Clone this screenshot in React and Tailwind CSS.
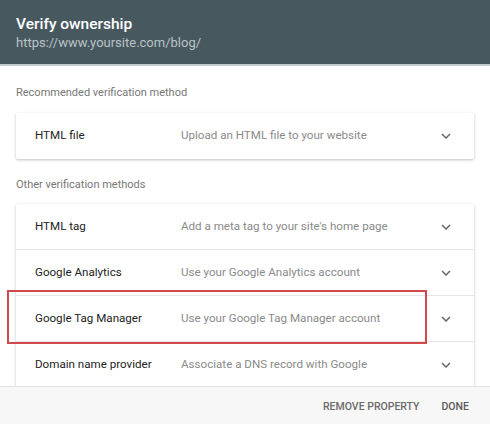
import React from 'react';

const Chevron = () => (
  <svg width="18" height="18" viewBox="0 0 24 24" className="text-[#666]">
    <path d="M7.41 8.59 12 13.17l4.59-4.58L18 10l-6 6-6-6z" fill="currentColor" />
  </svg>
);

const Row = ({ name, desc, last, highlight }) => (
  <div className={'relative flex items-center h-[46px] pl-[19px] pr-[19px] ' + (last ? '' : 'border-b border-[#e6e6e6]')}>
    <div className="w-[146px] text-[11.6px] text-[#222]">{name}</div>
    <div className="flex-1 text-[11.6px] text-[#8a8a8a]">{desc}</div>
    <Chevron />
    {highlight && (
      <div className="absolute left-[-9px] top-[-6px] w-[420px] h-[54px] border-2 border-[#d2494b]" />
    )}
  </div>
);

const App = () => {
  const others = [
    { name: 'HTML tag', desc: "Add a meta tag to your site's home page" },
    { name: 'Google Analytics', desc: 'Use your Google Analytics account' },
    { name: 'Google Tag Manager', desc: 'Use your Google Tag Manager account', highlight: true },
    { name: 'Domain name provider', desc: 'Associate a DNS record with Google' },
  ];

  return (
    <div className="w-[490px] h-[424px] flex flex-col bg-white overflow-hidden font-['Roboto',sans-serif]">
      <div className="h-[66px] shrink-0 bg-[#48585f] px-4 pt-[14px] border-b-2 border-[#c5cacd]">
        <div className="text-[15.5px] font-medium text-white leading-[20px]">Verify ownership</div>
        <div className="text-[13px] text-[#b8c2c7] leading-[18px]">https://www.yoursite.com/blog/</div>
      </div>
      <div className="flex-1 overflow-hidden px-4">
        <div className="text-[11px] text-[#777] mt-[20px] leading-[14px]">Recommended verification method</div>
        <div className="mt-[13px] rounded-[2px] bg-white shadow-[0_1px_3px_rgba(0,0,0,0.25)]">
          <Row name="HTML file" desc="Upload an HTML file to your website" last />
        </div>
        <div className="text-[11px] text-[#777] mt-[19px] leading-[14px]">Other verification methods</div>
        <div className="mt-[12px] rounded-[2px] bg-white shadow-[0_1px_3px_rgba(0,0,0,0.25)] [&>div]:h-[46px]">
          {others.map((o) => (
            <Row key={o.name} {...o} />
          ))}
          <div />
        </div>
      </div>
      <div className="h-[38px] shrink-0 bg-[#f7f7f7] border-t border-[#e4e4e4] flex items-center justify-end gap-[22px] pr-[21px] pt-[3px]">
        <span className="text-[10.5px] font-medium text-[#6b6b6b]">REMOVE PROPERTY</span>
        <span className="text-[10.5px] font-medium text-[#5a5a5a]">DONE</span>
      </div>
    </div>
  );
};

export default App;
